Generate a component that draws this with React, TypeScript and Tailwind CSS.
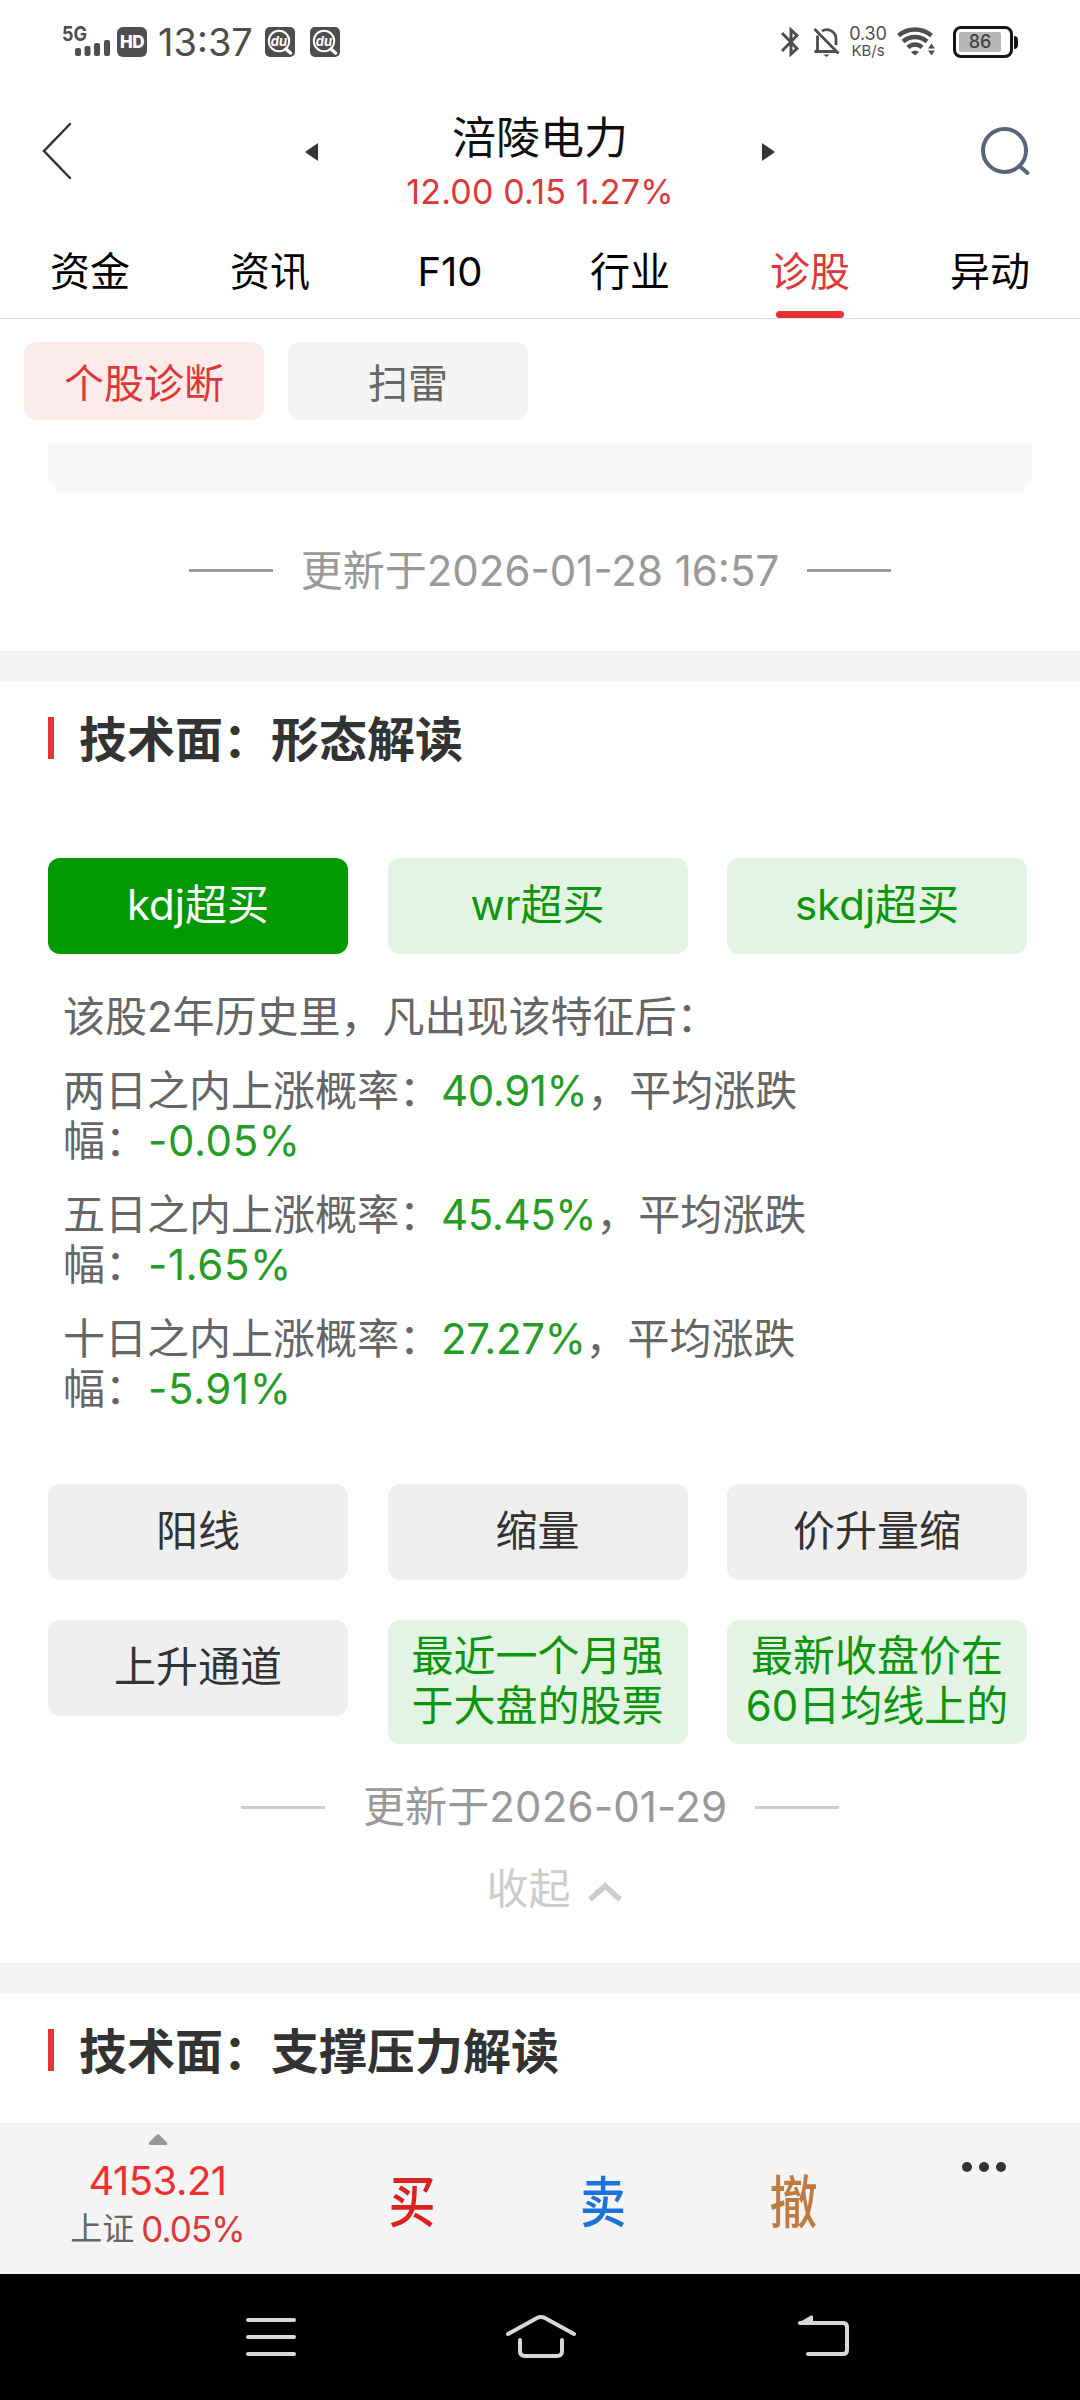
import { useState } from 'react'
import clsx from 'clsx'

interface Feature {
  name: string
  tone: 'green' | 'gray'
}

interface Stat {
  label: string
  rate: string
  change: string
}

const tabs = ['资金', '资讯', 'F10', '行业', '诊股', '异动']

const topFeatures: Feature[] = [
  { name: 'kdj超买', tone: 'green' },
  { name: 'wr超买', tone: 'green' },
  { name: 'skdj超买', tone: 'green' },
]

const moreFeatures: Feature[] = [
  { name: '阳线', tone: 'gray' },
  { name: '缩量', tone: 'gray' },
  { name: '价升量缩', tone: 'gray' },
  { name: '上升通道', tone: 'gray' },
  { name: '最近一个月强于大盘的股票', tone: 'green' },
  { name: '最新收盘价在60日均线上的', tone: 'green' },
]

const stats: Stat[] = [
  { label: '两日之内上涨概率：', rate: '40.91%', change: '-0.05%' },
  { label: '五日之内上涨概率：', rate: '45.45%', change: '-1.65%' },
  { label: '十日之内上涨概率：', rate: '27.27%', change: '-5.91%' },
]

function SearchBadge() {
  return (
    <svg width="30" height="30" viewBox="0 0 30 30">
      <rect width="30" height="30" rx="5" fill="#4e4e4e" />
      <circle cx="14" cy="14" r="10.2" fill="none" stroke="#fff" strokeWidth="2" />
      <path d="M21 22l4.500 4" stroke="#fff" strokeWidth="3.4" strokeLinecap="round" />
      <text x="14" y="18.500" fill="#fff" fontSize="13" fontStyle="italic" fontWeight="700" textAnchor="middle">
        du
      </text>
    </svg>
  )
}

function StatusBar() {
  return (
    <div className="flex h-[84px] items-center pl-[60px] pr-[62px] text-[#4e4e4e]">
      <svg width="52" height="48" viewBox="-2 -6 52 48">
        <text x="0" y="17" fontSize="20" fontWeight="700" fill="#4e4e4e" textLength="25" lengthAdjust="spacingAndGlyphs">
          5G
        </text>
        <g fill="#4e4e4e">
          <rect x="13" y="24" width="6" height="8" rx="2" />
          <rect x="22.5" y="22" width="6" height="10" rx="2" />
          <rect x="32" y="19" width="6" height="13" rx="2" />
          <rect x="42" y="16" width="6" height="16" rx="2" />
        </g>
      </svg>
      <div className="ml-[5px] flex h-[30px] w-[30px] items-center justify-center rounded-md bg-[#4e4e4e] text-[17px] font-extrabold leading-none tracking-[-0.5px] text-white">
        HD
      </div>
      <span className="ml-[11px] w-[107px] whitespace-nowrap text-[38px] leading-none">13:37</span>
      <div className="flex gap-[15px]">
        <SearchBadge />
        <SearchBadge />
      </div>
      <div className="flex-1" />
      <svg width="18" height="30" viewBox="0 0 18 30" fill="none" stroke="#4e4e4e" strokeWidth="3">
        <path d="M1 6l15 15.500-6 5.500V3l6 5.500L1 24" />
      </svg>
      <svg className="ml-[14px]" width="28" height="32" viewBox="0 0 28 32" fill="none" stroke="#4e4e4e" strokeWidth="2.800">
        <path d="M1.500 3l24 24.500M4.500 9.500V25.500H22M1.500 25.500H24M9 5c6-3.500 14 .5 14 8v6" />
        <path d="M10 28.500h7l-3.500 2.500z" fill="#4e4e4e" stroke="none" />
      </svg>
      <div className="ml-[6px] flex w-[42px] flex-col items-center">
        <span className="text-[18px] leading-[18px] tracking-[-0.200px]">0.30</span>
        <span className="text-[15px] leading-[16px]">KB/s</span>
      </div>
      <svg className="ml-[8px]" width="40" height="30" viewBox="0 0 40 30" fill="none" stroke="#4e4e4e" strokeWidth="4.400">
        <path d="M1.500 8.500c10-8 23-8 33 0" />
        <path d="M6 14.500c7-6 17-6 24 0" />
        <path d="M11 20.500c4-4 10-4 14 0" />
        <path d="M14 25q4-3 8 0l-4 3.500z" fill="#4e4e4e" stroke="none" />
        <path d="M31 21.500l3.500-5 3.500 5zM31 23.500h7l-3.500 5z" fill="#4e4e4e" stroke="none" />
      </svg>
      <div className="ml-[16px] flex h-[32px] w-[60px] items-center rounded-[8px] border-[3px] border-[#151515] px-[3px]">
        <div className="flex h-[20px] w-[42px] items-center justify-center rounded-[2px] bg-[#b8b8b8] text-[18px] font-medium leading-none text-[#444]">
          86
        </div>
      </div>
      <div className="ml-px h-[13px] w-[4px] rounded-r-[4px] bg-[#151515]" />
    </div>
  )
}

function Header() {
  return (
    <div className="flex h-[144px] items-center pl-[42px]">
      <svg width="30" height="58" viewBox="0 0 30 58" fill="none" stroke="#333" strokeWidth="2.500" strokeLinecap="round" className="mb-[10px]">
        <path d="M28 2L2 29 28 56" />
      </svg>
      <div className="ml-[233px] flex w-[470px] items-center justify-between">
        <svg width="13" height="18" viewBox="0 0 13 18" className="mb-[9px]">
          <path d="M13 0v18L0 9z" fill="#333" />
        </svg>
        <div className="flex flex-col items-center pt-[17px]">
          <h1 className="text-[44px] leading-[54px] text-[#111]">涪陵电力</h1>
          <p className="text-[34px] leading-[54px] tracking-[0.2px] text-[#dc3838]">12.00 0.15 1.27%</p>
        </div>
        <svg width="13" height="18" viewBox="0 0 13 18" className="mb-[9px]">
          <path d="M0 0v18l13-9z" fill="#333" />
        </svg>
      </div>
      <svg width="52" height="50" viewBox="0 0 52 50" fill="none" stroke="#57647b" strokeWidth="4" className="mb-[10px] ml-[205px]">
        <circle cx="24.500" cy="24.500" r="21.500" />
        <path d="M39.500 40l8 7" strokeLinecap="round" />
      </svg>
    </div>
  )
}

function UpdatedAt({ time, light = false }: { time: string; light?: boolean }) {
  const line = clsx('h-[3px] w-[84px]', light ? 'bg-[#ccc]' : 'bg-[#999]')
  return (
    <div className="flex items-center justify-center">
      <div className={line} />
      <span
        className={clsx(
          'mr-[28px] text-[42px] leading-[50px] text-[#999]',
          light ? 'ml-[38px] tracking-[0.15px]' : 'ml-[28px]'
        )}
      >
        更新于{time}
      </span>
      <div className={line} />
    </div>
  )
}

function SectionTitle({ text }: { text: string }) {
  return (
    <div className="flex h-[114px] shrink-0 items-center pl-[48px]">
      <div className="h-[42px] w-[6px] bg-[#e63232]" />
      <h2 className="ml-[25px] pt-[4px] text-[48px] font-bold leading-[56px] text-[#333]">{text}</h2>
    </div>
  )
}

function FeatureButton({ item, active, onClick }: { item: Feature; active: boolean; onClick: () => void }) {
  return (
    <button
      onClick={onClick}
      className={clsx(
        'min-h-[96px] w-[300px] rounded-[12px] px-[18px] pb-[13px] pt-[11px] text-[42px] leading-[50px]',
        active && 'bg-[#009900] text-white',
        !active && item.tone === 'green' && 'bg-[#e3f3e4] text-[#0d960d]',
        !active && item.tone === 'gray' && 'bg-[#efefef] text-[#333]'
      )}
    >
      {item.name}
    </button>
  )
}

export default function App() {
  const [tab, setTab] = useState('诊股')
  const [feature, setFeature] = useState('kdj超买')

  return (
    <div className="flex h-[2400px] w-[1080px] flex-col overflow-hidden bg-white font-['Inter','Noto_Sans_CJK_SC',sans-serif]">
      <StatusBar />
      <Header />

      {/* Tabs */}
      <div className="flex h-[91px] border-b border-[#dedede]">
        {tabs.map((t) => (
          <button
            key={t}
            onClick={() => setTab(t)}
            className={clsx(
              'flex flex-1 flex-col items-center justify-between pt-[19px] text-[40px] leading-[50px]',
              t === tab ? 'text-[#dc3838]' : 'text-black'
            )}
          >
            {t}
            {t === tab && <span className="h-[7px] w-[68px] rounded-full bg-[#e63232]" />}
          </button>
        ))}
      </div>

      {/* Sub tabs */}
      <div className="flex gap-[24px] px-[24px] py-[23px] text-[40px]">
        <button className="h-[78px] w-[240px] rounded-[12px] bg-[#fdeaea] pt-[6px] text-[#dc3838]">个股诊断</button>
        <button className="h-[78px] w-[240px] rounded-[12px] bg-[#f4f4f4] pt-[6px] text-[#666]">扫雷</button>
      </div>

      <div className="mx-[48px] h-[50px] rounded-b-[18px] bg-[#f7f8fa]" />
      <div className="flex h-[158px] items-center justify-center pb-[3px]">
        <UpdatedAt time="2026-01-28 16:57" />
      </div>
      <div className="h-[30px] bg-[#f4f4f4]" />

      {/* Patterns */}
      <SectionTitle text="技术面：形态解读" />
      <div className="mt-[63px] flex gap-[39.500px] pl-[48px]">
        {topFeatures.map((f) => (
          <FeatureButton key={f.name} item={f} active={f.name === feature} onClick={() => setFeature(f.name)} />
        ))}
      </div>
      <div className="mt-[38px] space-y-[24px] pl-[63px] text-[42px] leading-[50px] text-[#666]">
        <p>该股2年历史里，凡出现该特征后：</p>
        {stats.map((s) => (
          <p key={s.label} className="w-[760px]">
            {s.label}
            <span className="tracking-[-0.400px] text-[#259c25]">{s.rate}</span>，平均涨跌
            <br />
            幅：<span className="ml-[1px] tracking-[0.600px] text-[#259c25]">{s.change}</span>
          </p>
        ))}
      </div>
      <div className="mt-[70px] flex flex-wrap items-start gap-x-[39.500px] gap-y-[40px] pl-[48px]">
        {moreFeatures.map((f) => (
          <FeatureButton key={f.name} item={f} active={f.name === feature} onClick={() => setFeature(f.name)} />
        ))}
      </div>
      <div className="mt-[38px]">
        <UpdatedAt time="2026-01-29" light />
      </div>
      <button className="mt-[32px] flex items-center justify-center gap-[17px] pl-[28px] text-[42px] leading-[50px] text-[#ccc]">
        收起
        <svg width="34" height="20" viewBox="0 0 34 20" fill="none" stroke="#ccc" strokeWidth="5.500" className="mt-[6px]">
          <path d="M2 17.500L17 4l15 13.500" />
        </svg>
      </button>
      <div className="mt-[49px] h-[30px] shrink-0 bg-[#f4f4f4]" />

      <SectionTitle text="技术面：支撑压力解读" />

      {/* Trade bar */}
      <div className="mt-auto flex h-[151px] shrink-0 bg-[#f4f4f4]">
        <div className="flex w-[315px] flex-col items-center pt-[11px]">
          <svg width="20" height="11" viewBox="0 0 20 11">
            <path d="M8.500 1q1.500-1.500 3 0l7.500 7.500q1 2.500-1 2.500H2q-2 0-1-2.500z" fill="#999" />
          </svg>
          <span className="mt-[12px] text-[40px] leading-[48px] tracking-[-0.500px] text-[#ee2f2f]">4153.21</span>
          <div className="flex items-center gap-[7px] leading-[48px]">
            <span className="text-[32px] text-[#666]">上证</span>
            <span className="text-[35px] tracking-[-0.900px] text-[#dc3838]">0.05%</span>
          </div>
        </div>
        <button className="w-[191px] pl-[3px] pt-[8px] text-[47px] font-medium text-[#d92323]">
          <span className="inline-block scale-y-[1.180]">买</span>
        </button>
        <button className="w-[191px] pl-[3px] pt-[8px] text-[46px] font-medium text-[#1c72d9]">
          <span className="inline-block scale-y-[1.180]">卖</span>
        </button>
        <button className="w-[191px] pl-[2px] pt-[8px] text-[48px] font-medium text-[#bf7c42]">
          <span className="inline-block scale-y-[1.180]">撤</span>
        </button>
        <div className="flex flex-1 justify-center gap-[7px] pt-[39px]">
          <i className="h-[10px] w-[10px] rounded-full bg-[#333]" />
          <i className="h-[10px] w-[10px] rounded-full bg-[#333]" />
          <i className="h-[10px] w-[10px] rounded-full bg-[#333]" />
        </div>
      </div>

      {/* System navigation */}
      <div className="flex h-[126px] shrink-0 items-center bg-black pl-[246px]">
        <svg width="50" height="44" viewBox="0 0 50 44" stroke="#d8d8d8" strokeWidth="4" strokeLinecap="round">
          <path d="M2 5h46M2 22h46M2 39h46" />
        </svg>
        <svg className="ml-[209px]" width="72" height="48" viewBox="0 0 72 48" fill="none" stroke="#d8d8d8" strokeWidth="4" strokeLinecap="round">
          <path d="M3 21L32 5q4-2 8 0l29 16M15 27v11q0 5 5 5h32q5 0 5-5V27" />
        </svg>
        <svg className="ml-[221px]" width="52" height="44" viewBox="0 0 52 44" fill="none" stroke="#d8d8d8" strokeWidth="4" strokeLinecap="round">
          <path d="M2 8h43q4 0 4 4v23q0 4-4 4H10" />
          <path d="M0 8L13 0.500q2-.5 2 1V8z" fill="#d8d8d8" stroke="none" />
        </svg>
      </div>
    </div>
  )
}
